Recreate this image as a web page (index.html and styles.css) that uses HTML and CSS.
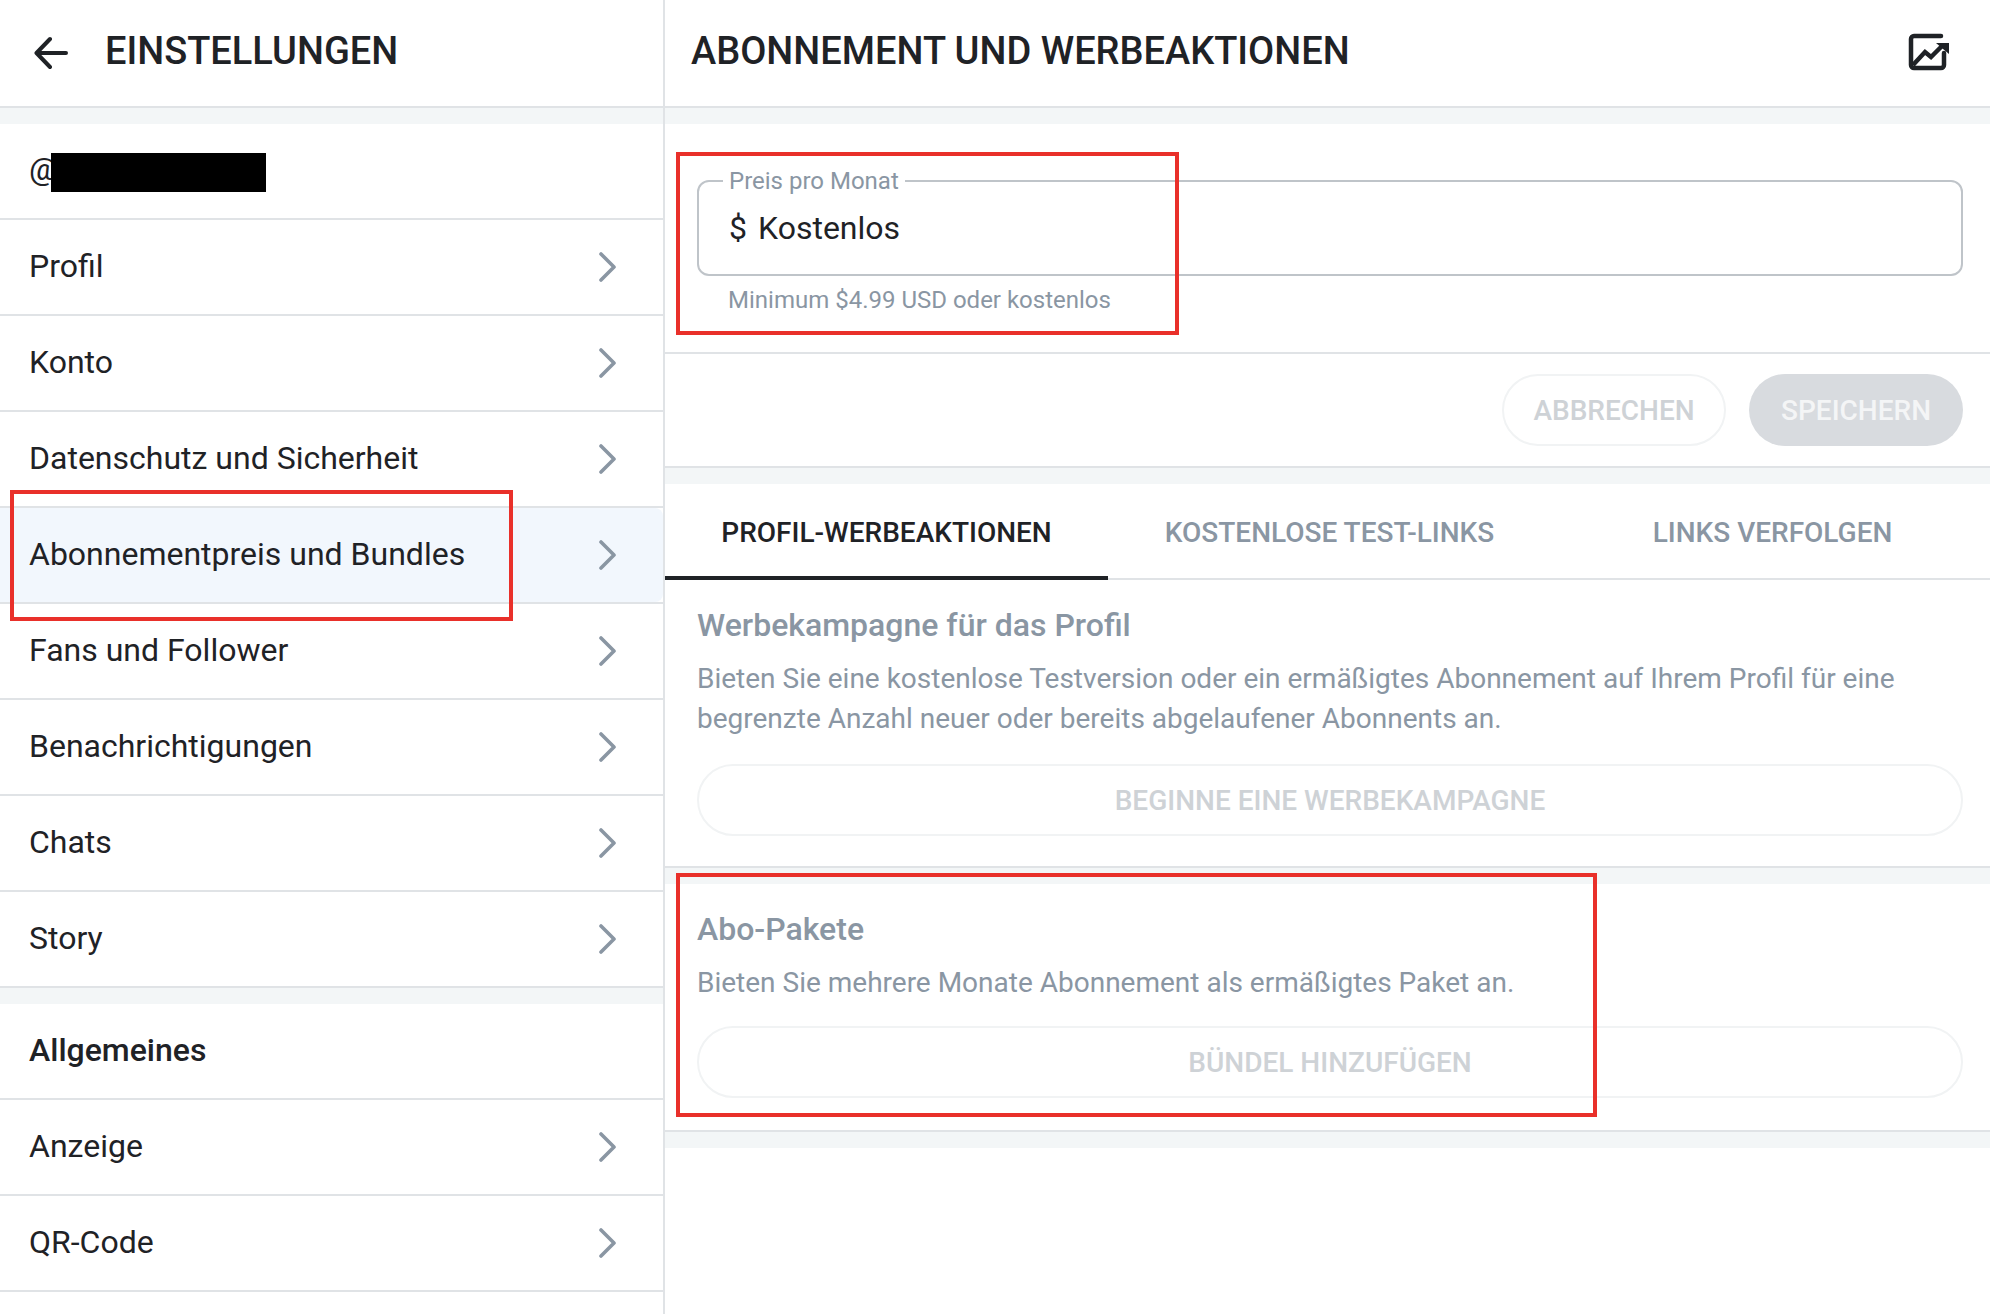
FILE: index.html
```html
<!DOCTYPE html>
<html lang="de">
<head>
<meta charset="utf-8">
<title>Abonnement und Werbeaktionen</title>
<link rel="stylesheet" href="styles.css">
</head>
<body>
<div class="app">
  <aside class="side">
    <header class="head">
      <svg class="back" viewBox="0 0 34 34" width="34" height="34"><path d="M32 17H3M16 3 2.5 17 16 31"/></svg>
      <h1>EINSTELLUNGEN</h1>
    </header>
    <div class="band"></div>
    <div class="row user"><span>@</span><i class="redact"></i></div>
    <a class="row">Profil<svg class="chev" viewBox="0 0 18 30"><path d="M2 2l13 13L2 28"/></svg></a>
    <a class="row">Konto<svg class="chev" viewBox="0 0 18 30"><path d="M2 2l13 13L2 28"/></svg></a>
    <a class="row">Datenschutz und Sicherheit<svg class="chev" viewBox="0 0 18 30"><path d="M2 2l13 13L2 28"/></svg></a>
    <a class="row active">Abonnementpreis und Bundles<svg class="chev" viewBox="0 0 18 30"><path d="M2 2l13 13L2 28"/></svg><b class="mark mark-nav"></b></a>
    <a class="row">Fans und Follower<svg class="chev" viewBox="0 0 18 30"><path d="M2 2l13 13L2 28"/></svg></a>
    <a class="row">Benachrichtigungen<svg class="chev" viewBox="0 0 18 30"><path d="M2 2l13 13L2 28"/></svg></a>
    <a class="row">Chats<svg class="chev" viewBox="0 0 18 30"><path d="M2 2l13 13L2 28"/></svg></a>
    <a class="row">Story<svg class="chev" viewBox="0 0 18 30"><path d="M2 2l13 13L2 28"/></svg></a>
    <div class="band"></div>
    <div class="row strong">Allgemeines</div>
    <a class="row">Anzeige<svg class="chev" viewBox="0 0 18 30"><path d="M2 2l13 13L2 28"/></svg></a>
    <a class="row">QR-Code<svg class="chev" viewBox="0 0 18 30"><path d="M2 2l13 13L2 28"/></svg></a>
  </aside>
  <main class="main">
    <header class="head head-main">
      <h1>ABONNEMENT UND WERBEAKTIONEN</h1>
      <svg class="stats" viewBox="0 0 42 38" width="42" height="38"><path class="frame" d="M34 3H7a3 3 0 0 0-3 3v26a3 3 0 0 0 3 3h27a3 3 0 0 0 3-3V20"/><path class="trend" d="M6 32 18 19l6 5L36 12"/><path class="tip" d="M29 10h13v11z"/></svg>
    </header>
    <div class="band"></div>
    <section class="price">
      <fieldset class="field">
        <legend>Preis pro Monat</legend>
        <div class="value"><span>$</span><span>Kostenlos</span></div>
      </fieldset>
      <p class="hint">Minimum $4.99 USD oder kostenlos</p>
      <b class="mark mark-price"></b>
    </section>
    <div class="actions">
      <button class="pill cancel">ABBRECHEN</button>
      <button class="pill save">SPEICHERN</button>
    </div>
    <div class="band"></div>
    <nav class="tabs">
      <a class="tab on">PROFIL-WERBEAKTIONEN</a>
      <a class="tab">KOSTENLOSE TEST-LINKS</a>
      <a class="tab">LINKS VERFOLGEN</a>
    </nav>
    <section class="block promo">
      <h2>Werbekampagne für das Profil</h2>
      <p>Bieten Sie eine kostenlose Testversion oder ein ermäßigtes Abonnement auf Ihrem Profil für eine begrenzte Anzahl neuer oder bereits abgelaufener Abonnents an.</p>
      <button class="pill wide">BEGINNE EINE WERBEKAMPAGNE</button>
    </section>
    <div class="band"></div>
    <section class="block bundles">
      <h2>Abo-Pakete</h2>
      <p>Bieten Sie mehrere Monate Abonnement als ermäßigtes Paket an.</p>
      <button class="pill wide">BÜNDEL HINZUFÜGEN</button>
      <b class="mark mark-bundles"></b>
    </section>
    <div class="band"></div>
  </main>
</div>
</body>
</html>
```
FILE: styles.css
```css
* { box-sizing: border-box; }
html, body { margin: 0; height: 100%; background: #fff; overflow: hidden; }
body { font-family: Roboto, "Liberation Sans", sans-serif; color: #1f2226; }
.app { display: grid; grid-template-columns: 665px 1fr; height: 1314px; }
.side { border-right: 2px solid #e0e3e6; position: relative; }
.main { position: relative; min-width: 0; overflow: hidden; }
.head { height: 108px; display: flex; align-items: center; border-bottom: 2px solid #e0e3e6; padding: 0 29px; gap: 37px; }
.head h1 { margin: 0; font-size: 38px; font-weight: 500; line-height: 1; position: relative; top: -2px; }
.head-main { justify-content: space-between; padding: 0 41px 0 26px; }
.back { fill: none; stroke: #1f2226; stroke-width: 4; stroke-linecap: round; stroke-linejoin: round; flex: none; margin-left: 5px; }
.stats { flex: none; margin-top: -2px; }
.stats .frame { fill: none; stroke: #1f2226; stroke-width: 4.5; stroke-linecap: round; }
.stats .trend { fill: none; stroke: #1f2226; stroke-width: 4.5; }
.stats .tip { fill: #1f2226; }
.band { height: 16px; background: #f3f6f7; }
.row { height: 96px; display: flex; align-items: center; justify-content: space-between; padding: 0 46px 2px 29px; font-size: 32px; border-bottom: 2px solid #e0e3e6; position: relative; }
.row.active { z-index: 0; }
.row.active::before { content: ""; position: absolute; inset: 0; background: #f2f7fd; border-radius: 0 8px 8px 0; z-index: -1; }
.row.strong { font-weight: 500; justify-content: flex-start; }
.row.user { justify-content: flex-start; padding-bottom: 4px; }
.redact { position: absolute; left: 51px; top: 29px; width: 215px; height: 39px; background: #000; }
.chev { width: 18px; height: 30px; fill: none; stroke: #8a96a3; stroke-width: 3.6; stroke-linecap: round; stroke-linejoin: round; flex: none; margin-top: 2px; }
.mark { position: absolute; border: 4px solid #e9302a; pointer-events: none; }
.mark-nav { left: 10px; top: -18px; width: 503px; height: 131px; }
.mark-price { left: 11px; top: 28px; width: 503px; height: 183px; }
.mark-bundles { left: 11px; top: -11px; width: 921px; height: 244px; }
.price { height: 230px; padding: 43px 27px 0 32px; border-bottom: 2px solid #e0e3e6; position: relative; }
.field { margin: 0; padding: 0 30px; height: 109px; border: 2px solid #bfc4c9; border-radius: 12px; min-width: 0; }
.field legend { padding: 0 6px; margin-left: -6px; font-size: 24px; line-height: 28px; color: #8a96a3; }
.value { display: flex; gap: 11px; font-size: 32px; line-height: 40px; margin-top: 13px; }
.hint { margin: 9px 0 0 31px; font-size: 24px; line-height: 30px; color: #8a96a3; }
.actions { height: 114px; display: flex; justify-content: flex-end; align-items: center; gap: 23px; padding: 0 27px 0 0; border-bottom: 2px solid #e0e3e6; }
.pill { height: 72px; border-radius: 36px; font: 500 28px Roboto, "Liberation Sans", sans-serif; padding: 0; }
.cancel { width: 224px; background: #fff; border: 2px solid #f1f3f4; color: #ced2d6; }
.save { width: 214px; background: #d8dbdf; border: 0; color: #f4f5f6; }
.tabs { display: grid; grid-template-columns: repeat(3, 443px); height: 96px; border-bottom: 2px solid #e0e3e6; }
.tab { display: flex; align-items: center; justify-content: center; font-size: 28px; font-weight: 500; color: #8a96a3; height: 96px; }
.tab.on { color: #1f2226; padding-top: 4px; border-bottom: 4px solid #1f2226; }
.block { padding: 25px 27px 30px 32px; border-bottom: 2px solid #e0e3e6; position: relative; }
.block h2 { margin: 0; font-size: 32px; line-height: 40px; font-weight: 500; color: #8a96a3; }
.block p { margin: 14px 0 0; font-size: 28px; line-height: 40px; color: #8a96a3; }
.wide { display: block; width: 100%; margin-top: 25px; background: #fff; border: 2px solid #f1f3f4; color: #ced2d6; }
.bundles { padding-bottom: 32px; }
.bundles .wide { margin-top: 23px; }
```
